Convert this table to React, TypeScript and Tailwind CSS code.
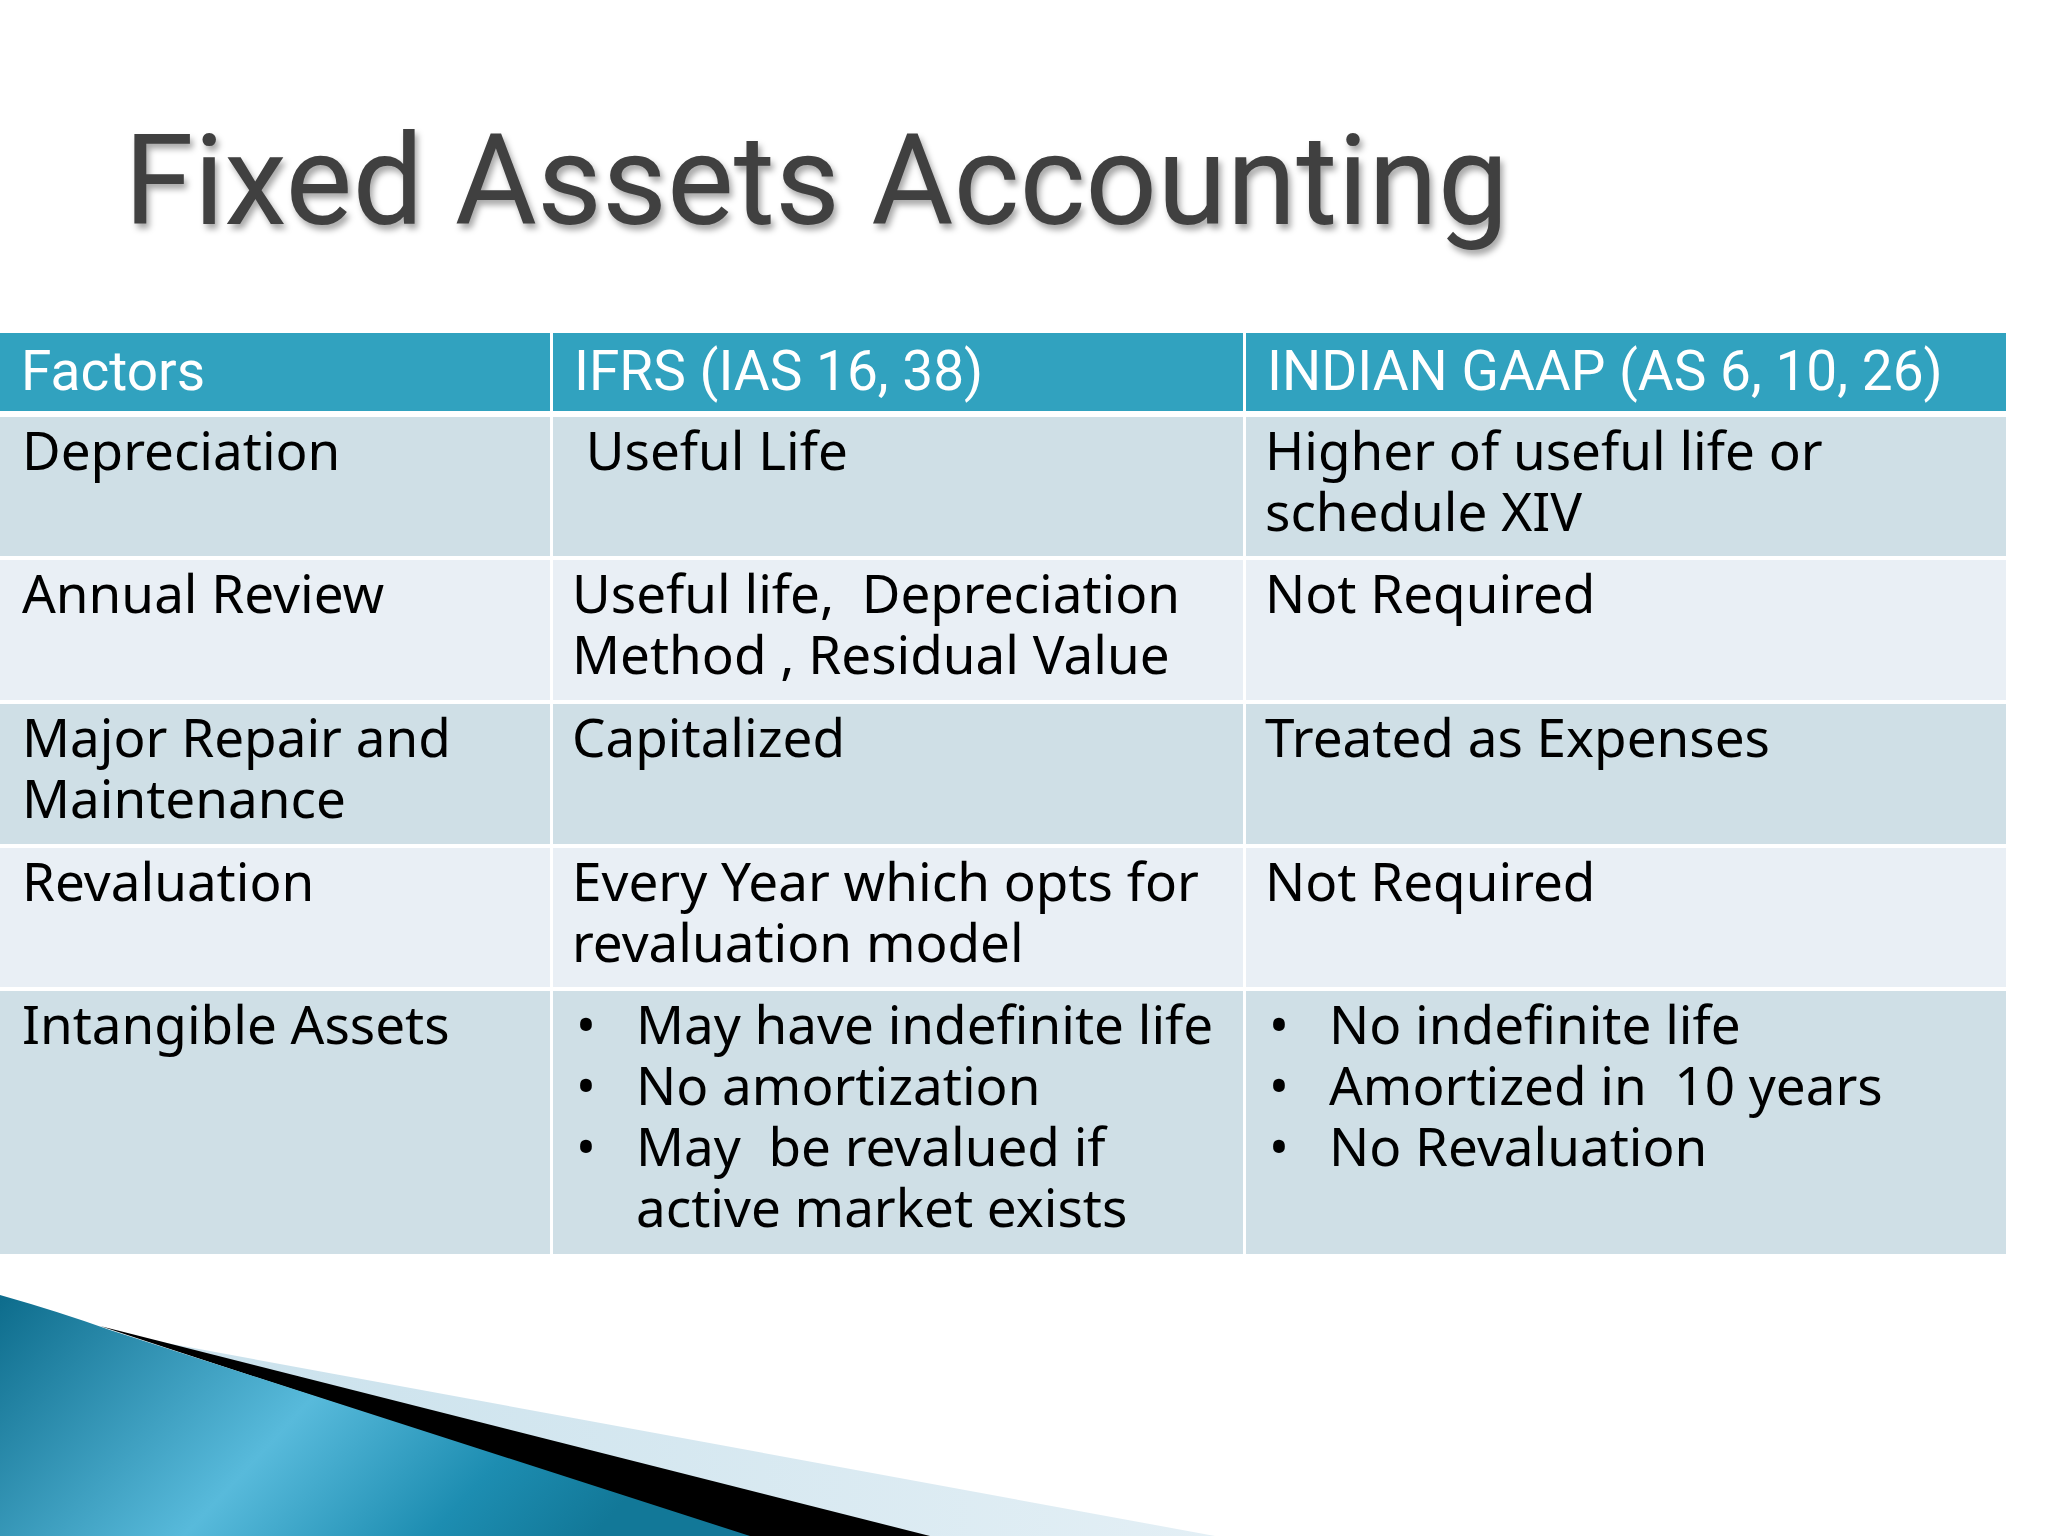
const body = { fontFamily: '"Noto Sans", "Open Sans", sans-serif' };
const head = { fontFamily: 'Roboto, "Liberation Sans", sans-serif' };

type Cell = string[] | { bullets: string[][] };

const rows: { bg: string; h: string; cells: Cell[] }[] = [
  {
    bg: "bg-[#cfdfe6]",
    h: "h-[139px]",
    cells: [["Depreciation"], ["\u00a0Useful Life"], ["Higher of useful life or", "schedule XIV"]],
  },
  {
    bg: "bg-[#e9eff5]",
    h: "h-[140px]",
    cells: [["Annual Review"], ["Useful life,\u00a0 Depreciation", "Method , Residual Value"], ["Not Required"]],
  },
  {
    bg: "bg-[#cfdfe6]",
    h: "h-[140px]",
    cells: [["Major Repair and", "Maintenance"], ["Capitalized"], ["Treated as Expenses"]],
  },
  {
    bg: "bg-[#e9eff5]",
    h: "h-[139px]",
    cells: [["Revaluation"], ["Every Year which opts for", "revaluation model"], ["Not Required"]],
  },
  {
    bg: "bg-[#cfdfe6]",
    h: "h-[263px]",
    cells: [
      ["Intangible Assets"],
      { bullets: [["May have indefinite life"], ["No amortization"], ["May\u00a0 be revalued if", "active market exists"]] },
      { bullets: [["No indefinite life"], ["Amortized in\u00a0 10 years"], ["No Revaluation"]] },
    ],
  },
];

function CellBody({ cell }: { cell: Cell }) {
  if (Array.isArray(cell)) {
    return (
      <div>
        {cell.map((l, i) => (
          <div key={i} className="whitespace-pre">
            {l}
          </div>
        ))}
      </div>
    );
  }
  return (
    <ul>
      {cell.bullets.map((b, i) => (
        <li key={i} className="flex">
          <span className="w-[64px] shrink-0 pl-[4px]">•</span>
          <span className="flex-1">
            {b.map((l, j) => (
              <div key={j} className="whitespace-pre">
                {l}
              </div>
            ))}
          </span>
        </li>
      ))}
    </ul>
  );
}

function Ribbon() {
  return (
    <svg width="2048" height="282" viewBox="0 1254 2048 282" className="block shrink-0">
      <defs>
        <linearGradient id="teal" x1="0" y1="0" x2="1" y2="0.3">
          <stop offset="0" stopColor="#0d6c8c" />
          <stop offset="0.5" stopColor="#58badb" />
          <stop offset="0.8" stopColor="#1d8db1" />
          <stop offset="1" stopColor="#127898" />
        </linearGradient>
        <linearGradient id="pale" x1="0" y1="0" x2="1" y2="0">
          <stop offset="0" stopColor="#c9e1ec" />
          <stop offset="1" stopColor="#e3eff5" />
        </linearGradient>
      </defs>
      <path d="M150 1340 L1215 1536 L900 1536 Z" fill="url(#pale)" />
      <path d="M100 1326 L930 1536 L740 1536 Z" fill="#000" />
      <path d="M0 1295 Q60 1312 110 1330 L750 1536 L0 1536 Z" fill="url(#teal)" />
    </svg>
  );
}

export default function App() {
  return (
    <div className="w-[2048px] h-[1536px] bg-white overflow-hidden flex flex-col">
      <h1
        className="pl-[124px] pt-[118px] h-[333px] shrink-0 text-[126px] leading-none text-[#404040] tracking-[0px]"
        style={{ ...head, textShadow: "3px 5px 6px rgba(0,0,0,0.35)" }}
      >
        Fixed Assets Accounting
      </h1>
      <div className="w-[2006px] flex flex-col gap-[4px] shrink-0">
        <div className="grid grid-cols-[550px_690px_760px] gap-[3px] h-[78px] mb-[2px]">
          {["Factors", "IFRS (IAS 16, 38)", "INDIAN GAAP (AS 6, 10, 26)"].map((t) => (
            <div key={t} className="bg-[#31a2bf] text-white text-[55px] leading-[76px] pl-[21px]" style={head}>
              {t}
            </div>
          ))}
        </div>
        {rows.map((r, ri) => (
          <div key={ri} className={`grid grid-cols-[550px_690px_760px] gap-[3px] ${r.h}`}>
            {r.cells.map((c, ci) => (
              <div
                key={ci}
                className={`${r.bg} text-black text-[53px] leading-[61px] pt-[2px] ${ci === 0 ? "pl-[22px]" : "pl-[19px]"}`}
                style={body}
              >
                <CellBody cell={c} />
              </div>
            ))}
          </div>
        ))}
      </div>
      <div className="flex-1" />
      <Ribbon />
    </div>
  );
}
